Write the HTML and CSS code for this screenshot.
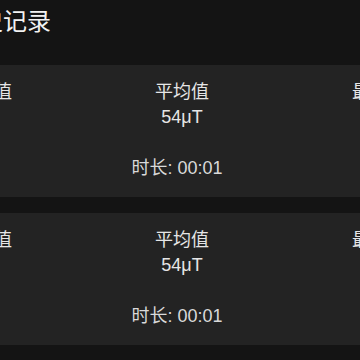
FILE: index.html
```html
<!DOCTYPE html>
<html lang="zh-CN">
<head>
    <meta charset="UTF-8">
    <title>历史记录</title>
    <link rel="stylesheet" href="styles.css">
</head>
<body>
    <div class="page">
        <h1 class="title">历史记录</h1>
        <div class="card">
            <div class="stats">
                <div class="stat"><div class="label">最小值</div><div class="value">54μT</div></div>
                <div class="stat"><div class="label">平均值</div><div class="value">54μT</div></div>
                <div class="stat"><div class="label">最大值</div><div class="value">54μT</div></div>
            </div>
            <div class="duration">时长: 00:01</div>
        </div>
        <div class="card">
            <div class="stats">
                <div class="stat"><div class="label">最小值</div><div class="value">54μT</div></div>
                <div class="stat"><div class="label">平均值</div><div class="value">54μT</div></div>
                <div class="stat"><div class="label">最大值</div><div class="value">54μT</div></div>
            </div>
            <div class="duration">时长: 00:01</div>
        </div>
    </div>
</body>
</html>
```

FILE: styles.css
```css
body {
    margin: 0;
    background: #141414;
    color: #e6e6e6;
    font-family: "Liberation Sans", "Noto Sans CJK SC", sans-serif;
    overflow: hidden;
    height: 100vh;
}
.page {
    width: 482px;
    margin-left: -59px;
}
.title {
    margin: 0 0 21px 0;
    padding-left: 14px;
    font-size: 24px;
    font-weight: normal;
    line-height: 44px;
    color: #f2f2f2;
}
.card {
    background: #232323;
    height: 132px;
    box-sizing: border-box;
    padding: 14px 17px 0 17px;
    margin-bottom: 16px;
}
.stats {
    display: flex;
    justify-content: space-between;
}
.stat {
    text-align: center;
}
.stat:first-child {
    text-align: left;
}
.stat:last-child {
    text-align: right;
}
.label {
    font-size: 18px;
    line-height: 26px;
}
.value {
    padding-top: 1px;
    font-size: 18px;
    line-height: 23px;
}
.duration {
    margin: 26px 10px 0 0;
    font-size: 18px;
    line-height: 26px;
    text-align: center;
    color: #d9d9d9;
}
```
